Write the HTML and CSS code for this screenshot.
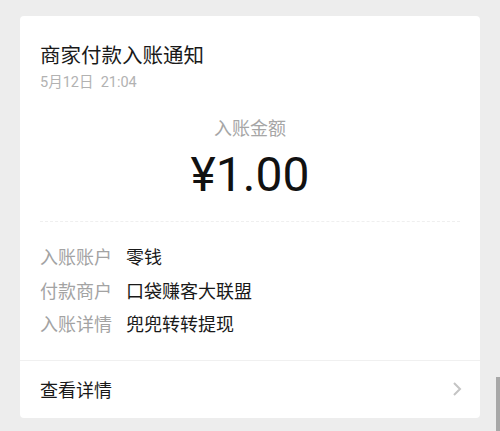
FILE: index.html
```html
<!DOCTYPE html>
<html>
<head>
    <meta charset="UTF-8">
    <title>商家付款入账通知</title>
    <link rel="stylesheet" href="styles.css">
</head>
<body>
<div class="card">
    <div class="card-head">
        <div class="title">商家付款入账通知</div>
        <div class="date">5月12日&nbsp; 21:04</div>

        <div class="amount-label">入账金额</div>
        <div class="amount">¥1.00</div>

        <div class="details">
            <div class="detail-row">
                <span class="detail-label">入账账户</span>
                <span class="detail-value">零钱</span>
            </div>
            <div class="detail-row">
                <span class="detail-label">付款商户</span>
                <span class="detail-value">口袋赚客大联盟</span>
            </div>
            <div class="detail-row">
                <span class="detail-label">入账详情</span>
                <span class="detail-value">兜兜转转提现</span>
            </div>
        </div>
    </div>

    <div class="card-foot">
        <span>查看详情</span>
        <svg class="chevron" width="10" height="16" viewBox="0 0 10 16">
            <path d="M2 2 L8 8 L2 14" fill="none" stroke="#c4c4c4" stroke-width="2"/>
        </svg>
    </div>
</div>

<div class="scrollbar"></div>
</body>
</html>
```

FILE: styles.css
```css
body {
    margin: 0;
    height: 431px;
    overflow: hidden;
    background: #ededed;
    font-family: Roboto, "Noto Sans CJK SC", sans-serif;
    color: #191919;
}

.card {
    margin: 16px 20px 0 20px;
    background: #fff;
    border-radius: 4px;
}

.card-head {
    padding: 26px 20px 18px 20px;
    border-bottom: 1px solid #f0f0f0;
}

.title {
    font-size: 20.5px;
    line-height: 28px;
}

.date {
    margin-top: 3px;
    font-size: 14.5px;
    line-height: 20px;
    color: #b2b2b2;
}

.amount-label {
    margin-top: 24px;
    text-align: center;
    font-size: 18px;
    line-height: 24px;
    color: #a6a6a6;
}

.amount {
    margin-top: 6px;
    text-align: center;
    font-size: 48px;
    line-height: 56px;
    color: #111;
}

.details {
    margin-top: 18px;
    padding-top: 19px;
    border-top: 1px dashed #efefef;
}

.detail-row {
    display: flex;
    gap: 14px;
    font-size: 18px;
    line-height: 33.5px;
}

.detail-label {
    color: #a3a3a3;
}

.detail-value {
    color: #191919;
}

.card-foot {
    display: flex;
    justify-content: space-between;
    align-items: center;
    height: 57px;
    padding: 0 18px 0 20px;
    font-size: 18px;
}

.scrollbar {
    position: absolute;
    right: 0;
    top: 377px;
    width: 4px;
    height: 54px;
    background: #a8a8a8;
}
```
